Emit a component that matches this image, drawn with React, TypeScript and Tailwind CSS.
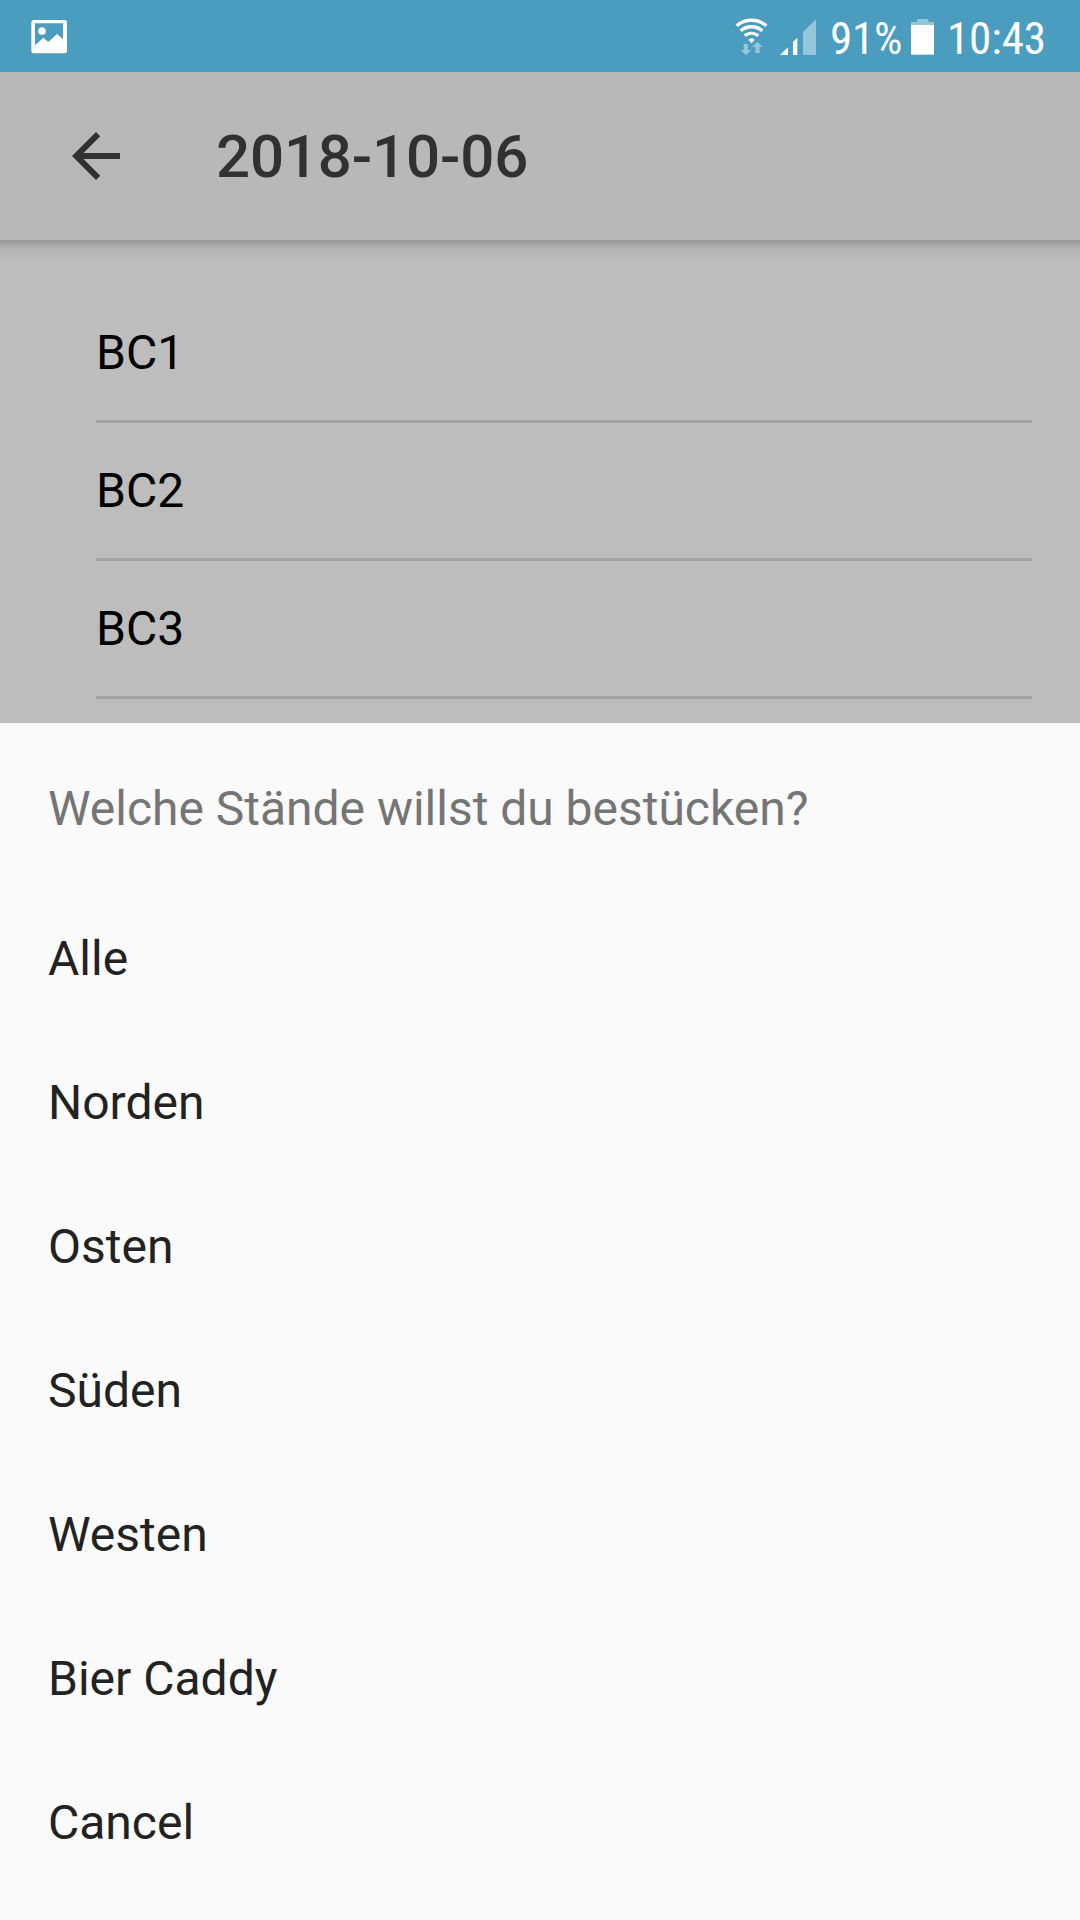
const options = ["Alle", "Norden", "Osten", "Süden", "Westen", "Bier Caddy", "Cancel"];
const items = ["BC1", "BC2", "BC3"];

function StatusBar() {
  return (
    <div className="flex h-[72px] items-center bg-[#4a9dbe] text-white">
      <svg className="ml-[31px] h-[72px] w-[36px]" viewBox="93 0 108 216">
        <path fillRule="evenodd" fill="#fff" d="M101 60h93q7 0 7 7v86q0 7-7 7h-93q-7 0-7-7V67q0-7 7-7zM105 70v66l25-23 15 13 26-24 18 16V70z" />
        <circle cx="126" cy="93" r="11.500" fill="#fff" />
      </svg>
      <svg className="ml-auto h-[72px] w-[81px]" viewBox="45 0 243 216">
        <g fill="none" stroke="#fff" strokeWidth="10">
          <path d="M50 77A69 69 0 0 1 139 77M62 92A51 51 0 0 1 127 92M74 107A34 34 0 0 1 115 107" />
        </g>
        <path d="M85 119q9.500-9 19 0L94.500 130z" fill="#fff" />
        <g fill="#94c5d9">
          <path d="M71 132h13v18h10l-16 16-16-16h9zM106 159h13v-18h9l-16-16-16 16h10z" />
          <path d="M249 96l39-38v107h-39z" />
        </g>
        <path d="M180 165l24-23v23zM219 126l13-13v52h-13z" fill="#fff" />
      </svg>
      <span className="ml-[14px] mt-[6px] w-[72px] whitespace-nowrap text-[45px] leading-[66px] tracking-[-0.200px] [font-stretch:75%]">91%</span>
      <svg className="ml-[9px] h-[72px] w-[24px]" viewBox="33 0 72 216">
        <path d="M51 57h34v9h17v9H33v-9h18z" fill="#94c5d9" />
        <path d="M33 75h69v89H33z" fill="#fff" />
      </svg>
      <span className="ml-[12px] mr-[33px] mt-[6px] w-[100px] whitespace-nowrap text-[45px] leading-[66px] tracking-[-0.100px] [font-stretch:75%]">10:43</span>
    </div>
  );
}

export default function App() {
  return (
    <div className="flex h-[1920px] w-[1080px] flex-col overflow-hidden bg-[#bdbdbd] font-[Roboto,sans-serif]">
      <StatusBar />
      <header className="flex h-[168px] items-center bg-[#b8b8b8] pl-[72px]">
        <svg className="h-[48px] w-[48px]" viewBox="0 0 16 16" fill="#313131">
          <path d="M16 7H3.830l5.590-5.590L8 0 0 8l8 8 1.410-1.410L3.830 9H16z" />
        </svg>
        <h1 className="ml-[96px] mt-[2px] text-[60px] font-medium tracking-[-0.150px] text-[#313131]">2018-10-06</h1>
      </header>
      <main className="h-[483px]">
        <div className="h-[21px] bg-linear-to-b from-[#999] via-[#b2b2b2] via-40% to-[#bdbdbd]" />
        <div className="pl-[96px] pr-[48px] pt-[24px]">
          {items.map((item) => (
            <div key={item} className="flex h-[138px] items-center border-b-[3px] border-[#a3a3a3] text-[48px] text-black">{item}</div>
          ))}
        </div>
      </main>
      <section className="flex-1 bg-[#fafafa] px-[48px] pt-[8px]">
        <h2 className="flex h-[156px] items-center text-[48px] tracking-[-0.020px] text-[#757575]">Welche Stände willst du bestücken?</h2>
        {options.map((option) => (
          <button key={option} className="flex h-[144px] w-full items-center text-[48px] text-[#222]">{option}</button>
        ))}
      </section>
    </div>
  );
}
